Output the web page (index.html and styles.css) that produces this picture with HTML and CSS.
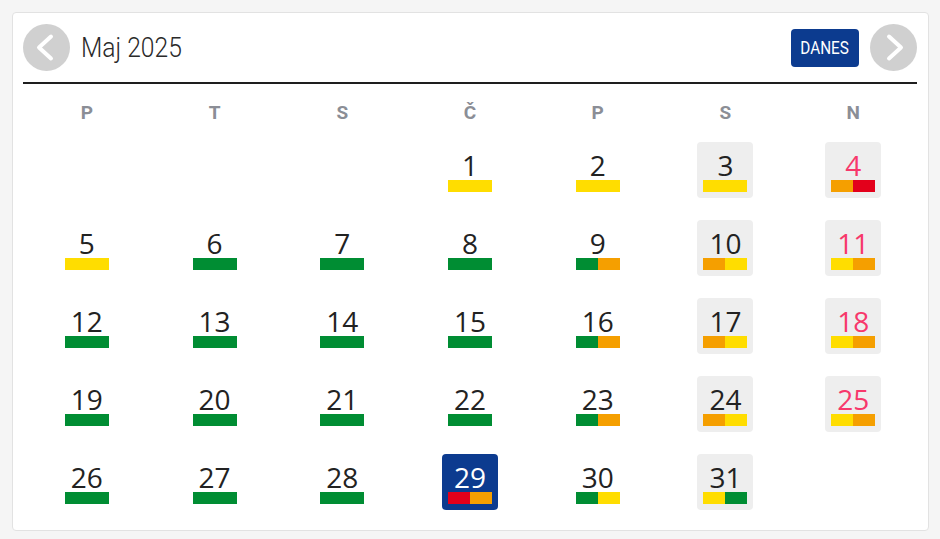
FILE: index.html
```html
<!DOCTYPE html>
<html lang="sl">
<head>
<meta charset="utf-8">
<title>Koledar</title>
<link rel="stylesheet" href="styles.css">
</head>
<body>
<div class="card">
  <div class="header">
    <button class="nav" aria-label="Prejšnji">
      <svg width="47" height="47" viewBox="0 0 47 47"><circle cx="23.5" cy="23.5" r="23.5" fill="#d0d0d0"/><path d="M28 12.5 L16 23.5 L28 34.5" fill="none" stroke="#fff" stroke-width="4" stroke-linecap="round" stroke-linejoin="round"/></svg>
    </button>
    <div class="title"><span>Maj 2025</span></div>
    <button class="today-btn"><span>DANES</span></button>
    <button class="nav" aria-label="Naslednji">
      <svg width="47" height="47" viewBox="0 0 47 47"><circle cx="23.5" cy="23.5" r="23.5" fill="#d0d0d0"/><path d="M19 12.5 L31 23.5 L19 34.5" fill="none" stroke="#fff" stroke-width="4" stroke-linecap="round" stroke-linejoin="round"/></svg>
    </button>
  </div>
  <div class="weekdays">
    <div>P</div><div>T</div><div>S</div><div>Č</div><div>P</div><div>S</div><div>N</div>
  </div>
  <div class="days">
    <div class="cell"></div><div class="cell"></div><div class="cell"></div>
    <div class="cell"><div class="day"><span class="num">1</span><span class="bar"><i class="y"></i></span></div></div>
    <div class="cell"><div class="day"><span class="num">2</span><span class="bar"><i class="y"></i></span></div></div>
    <div class="cell"><div class="day we"><span class="num">3</span><span class="bar"><i class="y"></i></span></div></div>
    <div class="cell"><div class="day we sun"><span class="num">4</span><span class="bar"><i class="o"></i><i class="r"></i></span></div></div>

    <div class="cell"><div class="day"><span class="num">5</span><span class="bar"><i class="y"></i></span></div></div>
    <div class="cell"><div class="day"><span class="num">6</span><span class="bar"><i class="g"></i></span></div></div>
    <div class="cell"><div class="day"><span class="num">7</span><span class="bar"><i class="g"></i></span></div></div>
    <div class="cell"><div class="day"><span class="num">8</span><span class="bar"><i class="g"></i></span></div></div>
    <div class="cell"><div class="day"><span class="num">9</span><span class="bar"><i class="g"></i><i class="o"></i></span></div></div>
    <div class="cell"><div class="day we"><span class="num">10</span><span class="bar"><i class="o"></i><i class="y"></i></span></div></div>
    <div class="cell"><div class="day we sun"><span class="num">11</span><span class="bar"><i class="y"></i><i class="o"></i></span></div></div>

    <div class="cell"><div class="day"><span class="num">12</span><span class="bar"><i class="g"></i></span></div></div>
    <div class="cell"><div class="day"><span class="num">13</span><span class="bar"><i class="g"></i></span></div></div>
    <div class="cell"><div class="day"><span class="num">14</span><span class="bar"><i class="g"></i></span></div></div>
    <div class="cell"><div class="day"><span class="num">15</span><span class="bar"><i class="g"></i></span></div></div>
    <div class="cell"><div class="day"><span class="num">16</span><span class="bar"><i class="g"></i><i class="o"></i></span></div></div>
    <div class="cell"><div class="day we"><span class="num">17</span><span class="bar"><i class="o"></i><i class="y"></i></span></div></div>
    <div class="cell"><div class="day we sun"><span class="num">18</span><span class="bar"><i class="y"></i><i class="o"></i></span></div></div>

    <div class="cell"><div class="day"><span class="num">19</span><span class="bar"><i class="g"></i></span></div></div>
    <div class="cell"><div class="day"><span class="num">20</span><span class="bar"><i class="g"></i></span></div></div>
    <div class="cell"><div class="day"><span class="num">21</span><span class="bar"><i class="g"></i></span></div></div>
    <div class="cell"><div class="day"><span class="num">22</span><span class="bar"><i class="g"></i></span></div></div>
    <div class="cell"><div class="day"><span class="num">23</span><span class="bar"><i class="g"></i><i class="o"></i></span></div></div>
    <div class="cell"><div class="day we"><span class="num">24</span><span class="bar"><i class="o"></i><i class="y"></i></span></div></div>
    <div class="cell"><div class="day we sun"><span class="num">25</span><span class="bar"><i class="y"></i><i class="o"></i></span></div></div>

    <div class="cell"><div class="day"><span class="num">26</span><span class="bar"><i class="g"></i></span></div></div>
    <div class="cell"><div class="day"><span class="num">27</span><span class="bar"><i class="g"></i></span></div></div>
    <div class="cell"><div class="day"><span class="num">28</span><span class="bar"><i class="g"></i></span></div></div>
    <div class="cell"><div class="day today"><span class="num">29</span><span class="bar"><i class="r"></i><i class="o"></i></span></div></div>
    <div class="cell"><div class="day"><span class="num">30</span><span class="bar"><i class="g"></i><i class="y"></i></span></div></div>
    <div class="cell"><div class="day we"><span class="num">31</span><span class="bar"><i class="y"></i><i class="g"></i></span></div></div>
    <div class="cell"></div>
  </div>
</div>
</body>
</html>
```
FILE: styles.css
```css
html, body {
  margin: 0;
  background: #f5f5f5;
}
body {
  padding: 12px 11px 0 12px;
}
.card {
  background: #fff;
  border: 1px solid #e2e2e2;
  border-radius: 4px;
  padding: 11px 11px 20px 10px;
}
.header {
  display: flex;
  align-items: center;
  height: 47px;
  padding-bottom: 11px;
  border-bottom: 2px solid #1e1e1e;
}
.nav {
  width: 47px;
  height: 47px;
  padding: 0;
  margin: 0;
  border: 0;
  background: none;
  display: block;
}
.nav svg { display: block; }
.title {
  margin-left: 11px;
  font-family: Roboto, "Liberation Sans", sans-serif;
  font-size: 28px;
  font-weight: 300;
  color: #2a2a2a;
  flex: 1;
}
.title span {
  display: inline-block;
  transform: scaleX(0.88);
  transform-origin: left center;
}
.today-btn {
  width: 68px;
  height: 38px;
  margin: 0 11px 0 0;
  padding: 0;
  border: 0;
  border-radius: 4px;
  background: #0c3b8f;
  color: #fff;
  font-family: Roboto, "Liberation Sans", sans-serif;
  font-size: 18px;
  display: flex;
  align-items: center;
  justify-content: center;
}
.today-btn span {
  display: inline-block;
  transform: scaleX(0.85);
}
.weekdays {
  display: grid;
  grid-template-columns: repeat(7, 1fr);
  margin-top: 18px;
  height: 22px;
  line-height: 22px;
  text-align: center;
  font-family: Roboto, "Liberation Sans", sans-serif;
  font-weight: 700;
  font-size: 19px;
  color: #8b8e96;
}
.days {
  display: grid;
  grid-template-columns: repeat(7, 1fr);
  row-gap: 22px;
  margin-top: 18px;
}
.cell {
  height: 56px;
  display: flex;
  justify-content: center;
}
.day {
  width: 56px;
  height: 56px;
  box-sizing: border-box;
  padding-top: 9px;
  border-radius: 4px;
  display: flex;
  flex-direction: column;
  align-items: center;
}
.day.we { background: #eeeeee; }
.day.today { background: #0c3b8f; }
.num {
  font-family: "Open Sans", "DejaVu Sans", sans-serif;
  font-size: 28px;
  line-height: 28px;
  height: 28px;
  color: #222;
  margin-bottom: 1px;
}
.sun .num { color: #f7386b; }
.today .num { color: #fff; }
.bar {
  display: flex;
  width: 44px;
  height: 12px;
}
.bar i {
  flex: 1;
  display: block;
}
.bar .y { background: #ffdd00; }
.bar .g { background: #008d33; }
.bar .o { background: #f59f00; }
.bar .r { background: #e3001b; }
```
